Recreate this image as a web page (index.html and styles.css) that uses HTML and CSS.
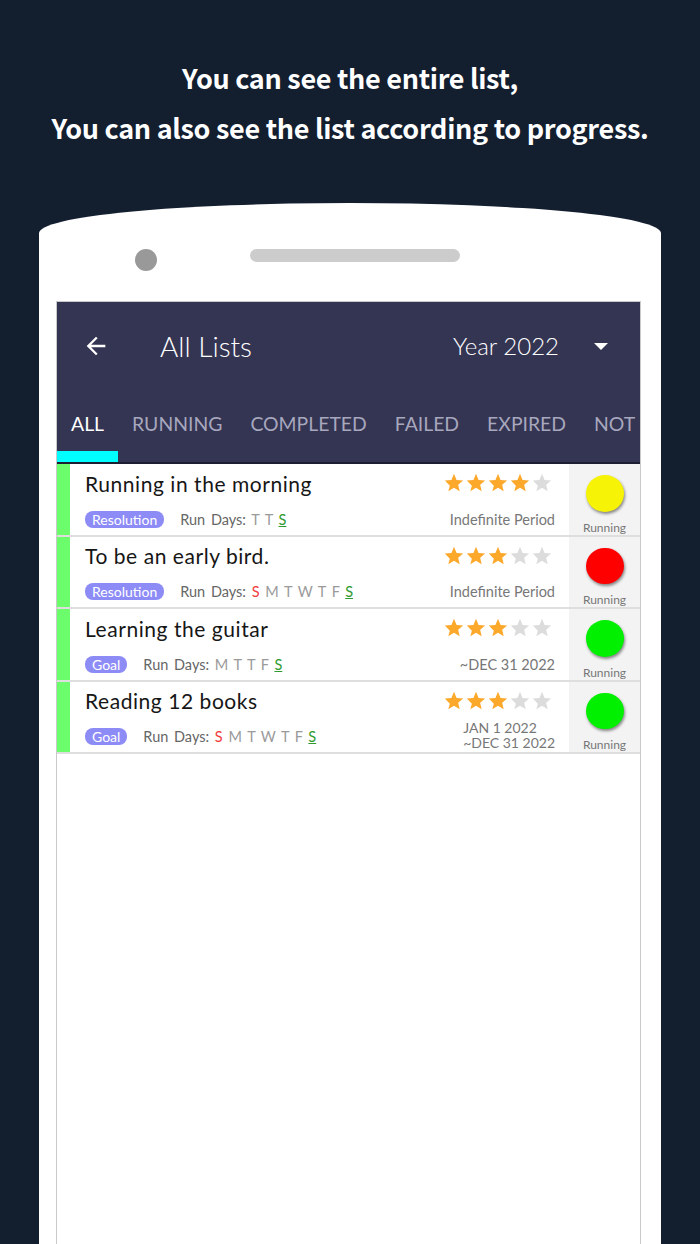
FILE: index.html
```html
<!DOCTYPE html>
<html>
<head>
<meta charset="utf-8">
<link rel="stylesheet" href="styles.css">
</head>
<body>
<div class="caption">
  <div>You can see the entire list,</div>
  <div>You can also see the list according to progress.</div>
</div>
<div class="phone">
  <div class="phone-top">
    <span class="camera"></span>
    <span class="speaker"></span>
  </div>
  <div class="screen">
    <div class="appbar">
      <div class="toolbar">
        <svg class="back" viewBox="0 0 24 24"><path d="M20 11H7.83l5.59-5.59L12 4l-8 8 8 8 1.41-1.41L7.83 13H20v-2z" fill="#fff"/></svg>
        <div class="title">All Lists</div>
        <div class="year">Year 2022</div>
        <span class="caret"></span>
      </div>
      <div class="tabs">
        <div class="tab active">ALL</div>
        <div class="tab">RUNNING</div>
        <div class="tab">COMPLETED</div>
        <div class="tab">FAILED</div>
        <div class="tab">EXPIRED</div>
        <div class="tab">NOT</div>
      </div>
    </div>
    <div class="list">
      <div class="row">
        <div class="bar"></div>
        <div class="main">
          <div class="top">
            <div class="name">Running in the morning</div>
            <div class="stars">
              <svg viewBox="0 0 24 24" class="on"><path d="M12 17.27L18.18 21l-1.64-7.03L22 9.24l-7.19-.61L12 2 9.19 8.63 2 9.24l5.46 5.73L5.82 21z"/></svg>
              <svg viewBox="0 0 24 24" class="on"><path d="M12 17.27L18.18 21l-1.64-7.03L22 9.24l-7.19-.61L12 2 9.19 8.63 2 9.24l5.46 5.73L5.82 21z"/></svg>
              <svg viewBox="0 0 24 24" class="on"><path d="M12 17.27L18.18 21l-1.64-7.03L22 9.24l-7.19-.61L12 2 9.19 8.63 2 9.24l5.46 5.73L5.82 21z"/></svg>
              <svg viewBox="0 0 24 24" class="on"><path d="M12 17.27L18.18 21l-1.64-7.03L22 9.24l-7.19-.61L12 2 9.19 8.63 2 9.24l5.46 5.73L5.82 21z"/></svg>
              <svg viewBox="0 0 24 24" class="off"><path d="M12 17.27L18.18 21l-1.64-7.03L22 9.24l-7.19-.61L12 2 9.19 8.63 2 9.24l5.46 5.73L5.82 21z"/></svg>
            </div>
          </div>
          <div class="bottom">
            <span class="badge">Resolution</span>
            <span class="days"><span class="label">Run Days:</span> T T <span class="sat">S</span></span>
            <span class="period">Indefinite Period</span>
          </div>
        </div>
        <div class="status"><span class="dot yellow"></span><span class="state">Running</span></div>
      </div>

      <div class="row">
        <div class="bar"></div>
        <div class="main">
          <div class="top">
            <div class="name">To be an early bird.</div>
            <div class="stars">
              <svg viewBox="0 0 24 24" class="on"><path d="M12 17.27L18.18 21l-1.64-7.03L22 9.24l-7.19-.61L12 2 9.19 8.63 2 9.24l5.46 5.73L5.82 21z"/></svg>
              <svg viewBox="0 0 24 24" class="on"><path d="M12 17.27L18.18 21l-1.64-7.03L22 9.24l-7.19-.61L12 2 9.19 8.63 2 9.24l5.46 5.73L5.82 21z"/></svg>
              <svg viewBox="0 0 24 24" class="on"><path d="M12 17.27L18.18 21l-1.64-7.03L22 9.24l-7.19-.61L12 2 9.19 8.63 2 9.24l5.46 5.73L5.82 21z"/></svg>
              <svg viewBox="0 0 24 24" class="off"><path d="M12 17.27L18.18 21l-1.64-7.03L22 9.24l-7.19-.61L12 2 9.19 8.63 2 9.24l5.46 5.73L5.82 21z"/></svg>
              <svg viewBox="0 0 24 24" class="off"><path d="M12 17.27L18.18 21l-1.64-7.03L22 9.24l-7.19-.61L12 2 9.19 8.63 2 9.24l5.46 5.73L5.82 21z"/></svg>
            </div>
          </div>
          <div class="bottom">
            <span class="badge">Resolution</span>
            <span class="days"><span class="label">Run Days:</span> <span class="sun">S</span> M T W T F <span class="sat">S</span></span>
            <span class="period">Indefinite Period</span>
          </div>
        </div>
        <div class="status"><span class="dot red"></span><span class="state">Running</span></div>
      </div>

      <div class="row">
        <div class="bar"></div>
        <div class="main">
          <div class="top">
            <div class="name">Learning the guitar</div>
            <div class="stars">
              <svg viewBox="0 0 24 24" class="on"><path d="M12 17.27L18.18 21l-1.64-7.03L22 9.24l-7.19-.61L12 2 9.19 8.63 2 9.24l5.46 5.73L5.82 21z"/></svg>
              <svg viewBox="0 0 24 24" class="on"><path d="M12 17.27L18.18 21l-1.64-7.03L22 9.24l-7.19-.61L12 2 9.19 8.63 2 9.24l5.46 5.73L5.82 21z"/></svg>
              <svg viewBox="0 0 24 24" class="on"><path d="M12 17.27L18.18 21l-1.64-7.03L22 9.24l-7.19-.61L12 2 9.19 8.63 2 9.24l5.46 5.73L5.82 21z"/></svg>
              <svg viewBox="0 0 24 24" class="off"><path d="M12 17.27L18.18 21l-1.64-7.03L22 9.24l-7.19-.61L12 2 9.19 8.63 2 9.24l5.46 5.73L5.82 21z"/></svg>
              <svg viewBox="0 0 24 24" class="off"><path d="M12 17.27L18.18 21l-1.64-7.03L22 9.24l-7.19-.61L12 2 9.19 8.63 2 9.24l5.46 5.73L5.82 21z"/></svg>
            </div>
          </div>
          <div class="bottom">
            <span class="badge">Goal</span>
            <span class="days"><span class="label">Run Days:</span> M T T F <span class="sat">S</span></span>
            <span class="period">~DEC 31 2022</span>
          </div>
        </div>
        <div class="status"><span class="dot green"></span><span class="state">Running</span></div>
      </div>

      <div class="row">
        <div class="bar"></div>
        <div class="main">
          <div class="top">
            <div class="name">Reading 12 books</div>
            <div class="stars">
              <svg viewBox="0 0 24 24" class="on"><path d="M12 17.27L18.18 21l-1.64-7.03L22 9.24l-7.19-.61L12 2 9.19 8.63 2 9.24l5.46 5.73L5.82 21z"/></svg>
              <svg viewBox="0 0 24 24" class="on"><path d="M12 17.27L18.18 21l-1.64-7.03L22 9.24l-7.19-.61L12 2 9.19 8.63 2 9.24l5.46 5.73L5.82 21z"/></svg>
              <svg viewBox="0 0 24 24" class="on"><path d="M12 17.27L18.18 21l-1.64-7.03L22 9.24l-7.19-.61L12 2 9.19 8.63 2 9.24l5.46 5.73L5.82 21z"/></svg>
              <svg viewBox="0 0 24 24" class="off"><path d="M12 17.27L18.18 21l-1.64-7.03L22 9.24l-7.19-.61L12 2 9.19 8.63 2 9.24l5.46 5.73L5.82 21z"/></svg>
              <svg viewBox="0 0 24 24" class="off"><path d="M12 17.27L18.18 21l-1.64-7.03L22 9.24l-7.19-.61L12 2 9.19 8.63 2 9.24l5.46 5.73L5.82 21z"/></svg>
            </div>
          </div>
          <div class="bottom">
            <span class="badge">Goal</span>
            <span class="days"><span class="label">Run Days:</span> <span class="sun">S</span> M T W T F <span class="sat">S</span></span>
            <span class="period two">JAN 1 2022<br>~DEC 31 2022</span>
          </div>
        </div>
        <div class="status"><span class="dot green"></span><span class="state">Running</span></div>
      </div>
    </div>
  </div>
</div>
</body>
</html>
```

FILE: styles.css
```css
html, body {
  margin: 0;
  padding: 0;
}
body {
  background: #131e2f;
  width: 700px;
  height: 1244px;
  overflow: hidden;
  font-family: "Lato", "Noto Sans", sans-serif;
}
.caption {
  padding-top: 53px;
  text-align: center;
  color: #ffffff;
  font-family: "Noto Sans CJK KR", "Noto Sans", sans-serif;
  font-weight: 700;
  font-size: 27px;
  line-height: 50px;
  letter-spacing: -0.3px;
}
.phone {
  margin-top: 50px;
  margin-left: 39px;
  width: 622px;
  height: 1100px;
  background: #ffffff;
  border-radius: 50% 50% 0 0 / 30px 30px 0 0;
}
.phone-top {
  height: 98px;
  position: relative;
}
.camera {
  position: absolute;
  left: 96px;
  top: 46px;
  width: 22px;
  height: 22px;
  border-radius: 50%;
  background: #999999;
}
.speaker {
  position: absolute;
  left: 211px;
  top: 46px;
  width: 210px;
  height: 13px;
  border-radius: 7px;
  background: #cccccc;
}
.screen {
  margin-left: 17px;
  width: 583px;
  height: 1000px;
  border: 1px solid #c9c9c9;
  border-bottom: none;
  background: #ffffff;
}
.appbar {
  background: #343453;
  border-bottom: 2px solid #1e1e33;
}
.toolbar {
  height: 88px;
  display: flex;
  align-items: center;
  color: #ffffff;
}
.back {
  width: 28px;
  height: 28px;
  margin-left: 25px;
}
.title {
  margin-left: 50px;
  font-size: 28px;
  font-weight: 300;
  flex: 1;
}
.year {
  font-size: 24px;
  font-weight: 300;
  margin-top: -2px;
}
.caret {
  margin-left: 35px;
  margin-right: 32px;
  width: 0;
  height: 0;
  border-left: 7px solid transparent;
  border-right: 7px solid transparent;
  border-top: 7px solid #ffffff;
}
.tabs {
  height: 72px;
  display: flex;
  overflow: hidden;
  white-space: nowrap;
}
.tab {
  padding: 5px 14px 0;
  display: flex;
  align-items: center;
  font-size: 19.4px;
  color: #a7a7bd;
  border-bottom: 11px solid transparent;
}
.tab.active {
  color: #ffffff;
  border-bottom-color: #00ffff;
}
.row {
  display: flex;
  height: 70.5px;
  border-bottom: 2px solid #dedede;
}
.bar {
  width: 13px;
  background: #6cfd6c;
}
.main {
  flex: 1;
  padding: 0 14px 0 15px;
  display: flex;
  flex-direction: column;
}
.top {
  height: 38px;
  display: flex;
  align-items: center;
  justify-content: space-between;
}
.name {
  font-size: 21px;
  color: #161616;
  letter-spacing: 0.55px;
}
.stars {
  display: flex;
  margin-right: 2px;
}
.stars svg {
  width: 22px;
  height: 22px;
}
.stars .on {
  fill: #fca82b;
}
.stars .off {
  fill: #dcdcdc;
}
.bottom {
  flex: 1;
  display: flex;
  align-items: center;
  padding-top: 2px;
}
.badge {
  background: #8d8cf7;
  color: #ffffff;
  font-size: 14px;
  line-height: 17px;
  padding: 0 7px;
  border-radius: 8px;
}
.days {
  margin-left: 16px;
  font-size: 14.5px;
  color: #9a9a9a;
  word-spacing: 2px;
}
.days .label {
  color: #666666;
}
.sun {
  color: #f23b3b;
}
.sat {
  color: #2f9a2f;
  text-decoration: underline;
}
.period {
  margin-left: auto;
  font-size: 14.5px;
  color: #777777;
}
.period.two {
  font-size: 14px;
  line-height: 14.5px;
  text-align: left;
  margin-top: -2px;
}
.status {
  width: 71px;
  background: #f3f3f3;
  display: flex;
  flex-direction: column;
  align-items: center;
  padding-top: 11px;
  box-sizing: border-box;
}
.dot {
  width: 38px;
  height: 38px;
  border-radius: 50%;
  box-shadow: 1px 2px 3px rgba(0, 0, 0, 0.45);
}
.dot.yellow { background: #f7f307; }
.dot.red { background: #ff0000; }
.dot.green { background: #00f000; }
.state {
  margin-top: 9px;
  font-size: 12px;
  line-height: 14px;
  color: #777777;
}
```
